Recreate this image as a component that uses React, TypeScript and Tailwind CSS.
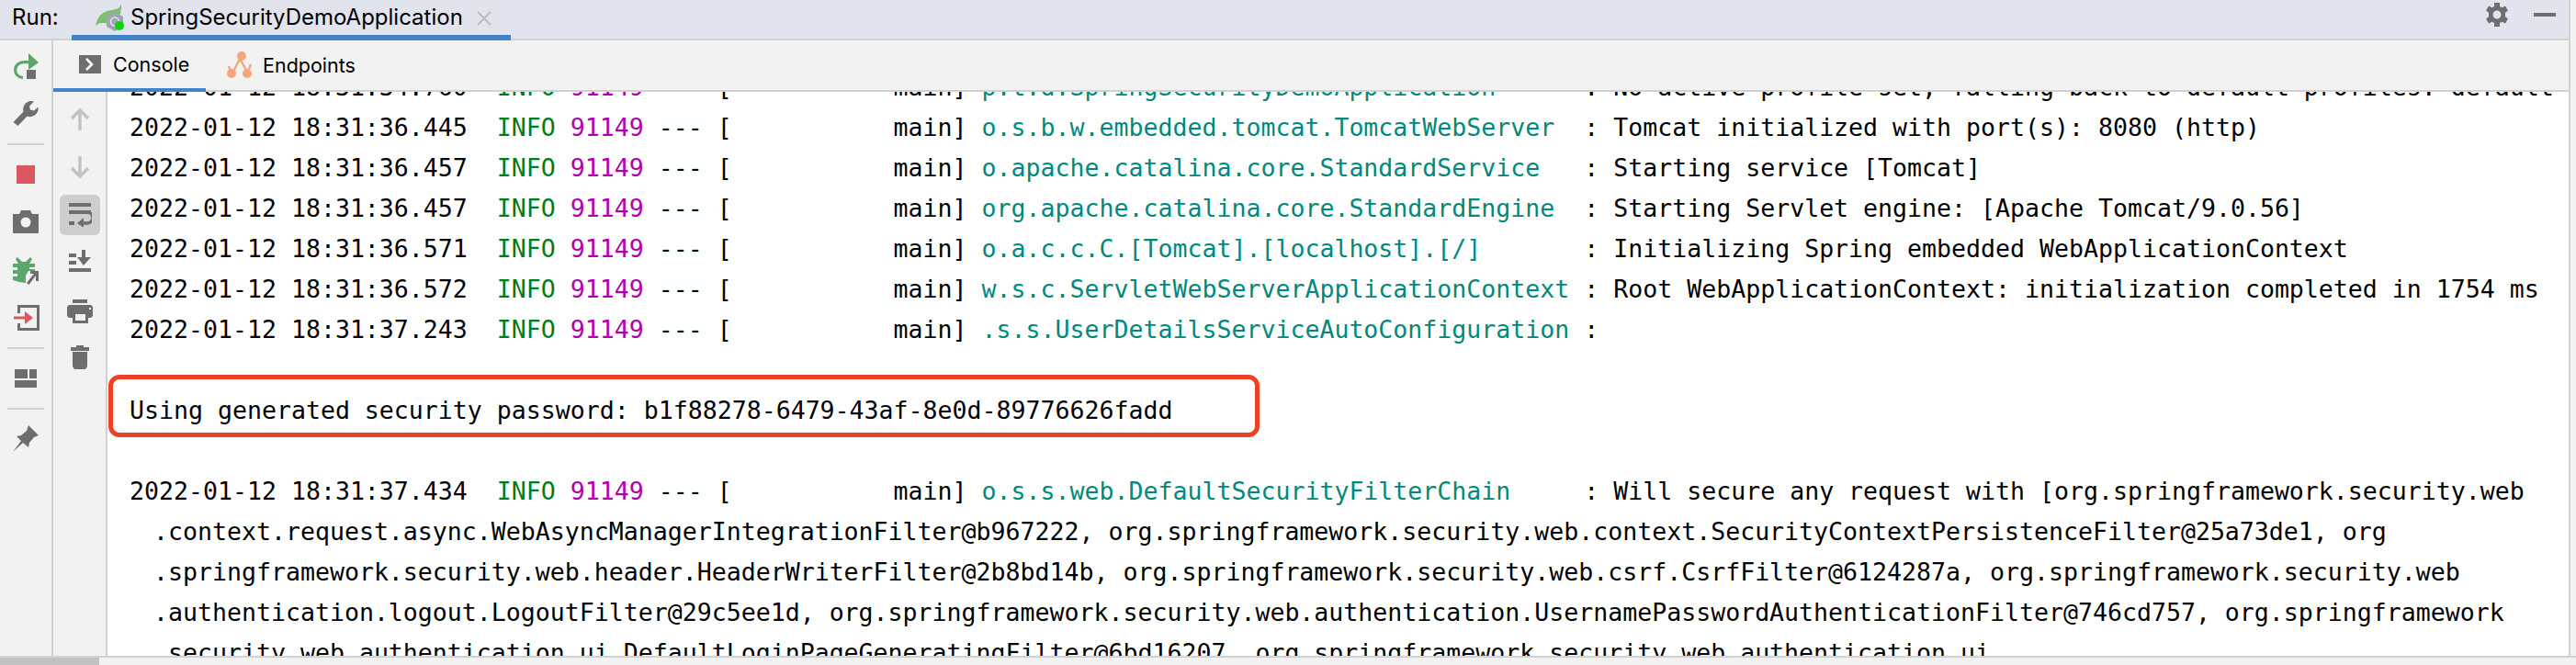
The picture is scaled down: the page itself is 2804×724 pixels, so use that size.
const logRows = [
  { time: "18:31:34.760", logger: "p.t.d.SpringSecurityDemoApplication", msg: "No active profile set, falling back to default profiles: default" },
  { time: "18:31:36.445", logger: "o.s.b.w.embedded.tomcat.TomcatWebServer", msg: "Tomcat initialized with port(s): 8080 (http)" },
  { time: "18:31:36.457", logger: "o.apache.catalina.core.StandardService", msg: "Starting service [Tomcat]" },
  { time: "18:31:36.457", logger: "org.apache.catalina.core.StandardEngine", msg: "Starting Servlet engine: [Apache Tomcat/9.0.56]" },
  { time: "18:31:36.571", logger: "o.a.c.c.C.[Tomcat].[localhost].[/]", msg: "Initializing Spring embedded WebApplicationContext" },
  { time: "18:31:36.572", logger: "w.s.c.ServletWebServerApplicationContext", msg: "Root WebApplicationContext: initialization completed in 1754 ms" },
  { time: "18:31:37.243", logger: ".s.s.UserDetailsServiceAutoConfiguration", msg: "" },
];

const wrapped = [
  ".context.request.async.WebAsyncManagerIntegrationFilter@b967222, org.springframework.security.web.context.SecurityContextPersistenceFilter@25a73de1, org",
  ".springframework.security.web.header.HeaderWriterFilter@2b8bd14b, org.springframework.security.web.csrf.CsrfFilter@6124287a, org.springframework.security.web",
  ".authentication.logout.LogoutFilter@29c5ee1d, org.springframework.security.web.authentication.UsernamePasswordAuthenticationFilter@746cd757, org.springframework",
  ".security.web.authentication.ui.DefaultLoginPageGeneratingFilter@6bd16207, org.springframework.security.web.authentication.ui",
];

function LogRow({ time, logger, msg }: { time: string; logger: string; msg: string }) {
  return (
    <div className="h-[44px] leading-[44px]">
      {"2022-01-12 " + time + "  "}
      <span className="text-[#007d17]">INFO</span>{" "}
      <span className="text-[#ae00b0]">91149</span>
      {" --- [           main] "}
      <span className="text-[#00897b]">{logger.padEnd(40, " ")}</span>
      {" : " + msg}
    </div>
  );
}

function SideSep() {
  return <div className="h-[2px] w-[40px] bg-[#d1d1d1]" />;
}

function LeftColumn() {
  return (
    <div className="flex w-[58px] shrink-0 flex-col items-center border-r-2 border-[#d1d1d1] bg-[#f2f2f2]">
      <svg className="mt-[14px] ml-[2px]" width="28" height="28" viewBox="0 0 28 28">
        <path d="M10 26.5C4 26 1.6 22 1.6 18C1.6 13 6 9.6 11 9.6H18" fill="none" stroke="#59a869" strokeWidth="3.2" />
        <path d="M16 0L27 10L16 18Z" fill="#59a869" />
        <rect x="14" y="18" width="10" height="10" fill="#6e6e6e" />
      </svg>
      <svg className="mt-[24px]" width="28" height="28" viewBox="0 0 28 28">
        <path d="M27.5 6.5A9 9 0 0 1 15.5 16.5L5.5 27L0.5 23L11.5 11.5A9 9 0 0 1 23 0.5L18 5.5L19 9.5L23 10.5Z" fill="#6e6e6e" />
      </svg>
      <div className="mt-[18px]">
        <SideSep />
      </div>
      <div className="mt-[22px] h-[20px] w-[20px] bg-[#db5860]" />
      <svg className="mt-[29px]" width="28" height="25" viewBox="0 0 28 25">
        <path fillRule="evenodd" d="M0 4H7L9 0H19L21 4H28V25H0ZM14 7.5A5.5 5.5 0 1 0 14 18.5A5.5 5.5 0 1 0 14 7.5Z" fill="#6e6e6e" />
      </svg>
      <svg className="mt-[26px] ml-[2px]" width="30" height="30" viewBox="0 0 30 30">
        <path d="M5 0L10 5H14L19 0L21 2L18 7H24V11H18V13H24V15H17L14 20V28L7 27L0 25V21H5V18H0V14H5V11H0V7H6L3 2Z" fill="#59a869" />
        <path d="M19 15H28V26H25V20L17.5 30L15 28L23 18H19Z" fill="#6e6e6e" />
      </svg>
      <svg className="mt-[22px] ml-[1px]" width="28" height="28" viewBox="0 0 28 28">
        <path d="M4 9V0H28V28H4V20H7V25H25V3H7V9Z" fill="#6e6e6e" />
        <path d="M0 12.5H12V7L21 14L12 21V15.5H0Z" fill="#db5860" />
      </svg>
      <div className="mt-[18px]">
        <SideSep />
      </div>
      <svg className="mt-[22px]" width="24" height="20" viewBox="0 0 24 20">
        <path d="M0 0H14V10H0ZM16 0H24V10H16ZM0 12H24V20H0Z" fill="#6e6e6e" />
      </svg>
      <div className="mt-[22px]">
        <SideSep />
      </div>
      <svg className="mt-[17px]" width="30" height="30" viewBox="0 0 30 30">
        <path d="M18 0L29 11L24 13L19 19L18 24L12 19L1 29L10 17L5 12L10 11L16 6Z" fill="#6e6e6e" />
      </svg>
    </div>
  );
}

function ToolColumn() {
  return (
    <div className="flex w-[59px] shrink-0 flex-col items-center border-r-2 border-[#d1d1d1] bg-[#f2f2f2]">
      <svg className="mt-[18px]" width="20" height="24" viewBox="0 0 20 24">
        <path d="M10 24V2M1 11L10 2L19 11" fill="none" stroke="#c2c2c2" strokeWidth="3.4" />
      </svg>
      <svg className="mt-[28px]" width="20" height="24" viewBox="0 0 20 24">
        <path d="M10 0V22M1 13L10 22L19 13" fill="none" stroke="#c2c2c2" strokeWidth="3.4" />
      </svg>
      <div className="mt-[18px] flex h-[44px] w-[44px] items-center justify-center rounded-[6px] bg-[#cdcdcd]">
        <svg width="26" height="26" viewBox="0 0 26 26">
          <rect x="1" y="0" width="24" height="4" fill="#6e6e6e" />
          <rect x="1" y="8" width="24" height="4" fill="#6e6e6e" />
          <rect x="1" y="20" width="6" height="4" fill="#6e6e6e" />
          <path d="M20 10H21A4.5 4.5 0 0 1 21 22H13" fill="none" stroke="#6e6e6e" strokeWidth="3.4" />
          <path d="M17 16V27L10 22Z" fill="#6e6e6e" />
        </svg>
      </div>
      <svg className="mt-[16px]" width="24" height="24" viewBox="0 0 24 24">
        <path d="M0 4H8V8H0ZM0 12H8V16H0ZM0 20H24V24H0ZM14 0H18V8H24L16 17L9 8H14Z" fill="#6e6e6e" />
      </svg>
      <svg className="mt-[30px]" width="28" height="26" viewBox="0 0 28 26">
        <path fillRule="evenodd" d="M6 0H22V4H6ZM2 6H26L28 8V18L26 20H23V26H6V20H2L0 18V8ZM9 16V23H20V16Z" fill="#6e6e6e" />
        <rect x="24" y="9" width="2" height="2" fill="#f2f2f2" />
      </svg>
      <svg className="mt-[24px]" width="20" height="26" viewBox="0 0 20 26">
        <path d="M6 0H14V2H20V6H0V2H6ZM2 7H18V23L16 26H4L2 23Z" fill="#6e6e6e" />
      </svg>
    </div>
  );
}

function LogPane() {
  return (
    <div className="min-w-0 flex-1 overflow-hidden bg-white pl-[24px] font-['DejaVu_Sans_Mono',monospace] text-[26.57px] whitespace-pre text-black">
      <div className="-mt-[27px]">
        {logRows.map((row) => (
          <LogRow key={row.time + row.logger} {...row} />
        ))}
        <div className="h-[44px]" />
        <div className="relative h-[44px] leading-[44px]">
          Using generated security password: b1f88278-6479-43af-8e0d-89776626fadd
          <div className="absolute -top-[17px] -left-[23px] h-[68px] w-[1253px] rounded-[12px] border-[5px] border-[#ee4023]" />
        </div>
        <div className="h-[44px]" />
        <LogRow
          time="18:31:37.434"
          logger="o.s.s.web.DefaultSecurityFilterChain"
          msg="Will secure any request with [org.springframework.security.web"
        />
        {wrapped.map((line) => (
          <div key={line} className="ml-[26px] h-[44px] leading-[44px]">
            {line}
          </div>
        ))}
      </div>
    </div>
  );
}

export default function App() {
  return (
    <div className="flex h-[724px] w-[2804px] flex-col overflow-hidden bg-[#f2f2f2] font-['Inter',sans-serif] text-black">
      <div className="flex min-h-0 flex-1">
        <div className="flex min-w-0 flex-1 flex-col">
          {/* run tabs */}
          <div className="flex h-[44px] shrink-0 items-stretch bg-[#e1e4ec] shadow-[inset_0_-2px_0_#d1d1d1]">
            <span className="ml-[13px] w-[65px] pt-[3px] text-[24px] leading-[32px]">Run:</span>
            <div className="flex w-[478px] items-start border-b-[6px] border-[#4083c9] pl-[26px]">
              <svg className="mt-[4px]" width="34" height="30" viewBox="0 0 34 30">
                <path d="M28 0C27 4 24 6 18 7C8 8 2 13 0 24C6 19 9 22 14 21C24 20 29 12 28 0Z" fill="#7fc06f" />
                <path d="M21 9L30 14V25L21 30L12 25V14Z" fill="#9aa7b0" />
                <circle cx="21" cy="19.5" r="4.5" fill="none" stroke="#e1e4ec" strokeWidth="1.6" />
                <circle cx="26" cy="24" r="5" fill="#10d010" />
              </svg>
              <span className="ml-[4px] pt-[3px] text-[24px] leading-[32px]">SpringSecurityDemoApplication</span>
              <svg className="mt-[12px] ml-[15px]" width="16" height="16" viewBox="0 0 16 16">
                <path d="M1 1L15 15M15 1L1 15" stroke="#bcbcbc" strokeWidth="2" />
              </svg>
            </div>
            <div className="ml-auto flex items-start pr-[14px]">
              <svg className="mt-[3px]" width="26" height="26" viewBox="0 0 26 26">
                <path
                  fillRule="evenodd"
                  d="M10 0H16V4L18.5 5.2L22 3.4L25 8.6L22 10.8V15.2L25 17.4L22 22.6L18.5 20.8L16 22V26H10V22L7.5 20.8L4 22.6L1 17.4L4 15.2V10.8L1 8.6L4 3.4L7.5 5.2L10 4ZM13 8.5A4.5 4.5 0 1 0 13 17.5A4.5 4.5 0 1 0 13 8.5Z"
                  fill="#6e6e6e"
                />
              </svg>
              <div className="mt-[14px] ml-[27px] h-[4px] w-[24px] bg-[#6e6e6e]" />
            </div>
          </div>
          <div className="flex min-h-0 flex-1">
            <LeftColumn />
            <div className="flex min-w-0 flex-1 flex-col">
              {/* console / endpoints tabs */}
              <div className="relative z-10 flex h-[56px] shrink-0 items-stretch bg-[#f2f2f2] shadow-[inset_0_-2px_0_#d1d1d1]">
                <div className="flex w-[166px] items-center border-b-4 border-[#4083c9] pl-[28px]">
                  <svg width="24" height="20" viewBox="0 0 24 20">
                    <rect width="24" height="20" fill="#6e6e6e" />
                    <path d="M8 4L14 10L8 16" fill="none" stroke="#ffffff" strokeWidth="2.6" />
                  </svg>
                  <span className="ml-[13px] text-[21.5px] leading-[32px]">Console</span>
                </div>
                <div className="flex items-center pb-[2px] pl-[23px]">
                  <svg width="28" height="30" viewBox="0 0 28 30">
                    <path d="M2 16L5 24M14 8L7 22L8 24M14 8L22 22M26 14L23 22" fill="none" stroke="#f4a77c" strokeWidth="2.4" />
                    <circle cx="16" cy="5" r="5" fill="#f4a77c" />
                    <circle cx="5" cy="24" r="5" fill="#f4a77c" />
                    <circle cx="22" cy="24" r="5" fill="#f4a77c" />
                  </svg>
                  <span className="ml-[11px] text-[21.5px] leading-[32px]">Endpoints</span>
                </div>
              </div>
              <div className="flex min-h-0 flex-1">
                <ToolColumn />
                <LogPane />
              </div>
            </div>
          </div>
        </div>
        <div className="w-[8px] shrink-0 border-l-2 border-[#d1d1d1] bg-[#f2f2f2]" />
      </div>
      {/* horizontal scrollbar */}
      <div className="h-[10px] shrink-0 border-t-2 border-[#d1d1d1] bg-[#f2f2f2]">
        <div className="h-full w-[108px] bg-[#c2c2c2]" />
      </div>
    </div>
  );
}
